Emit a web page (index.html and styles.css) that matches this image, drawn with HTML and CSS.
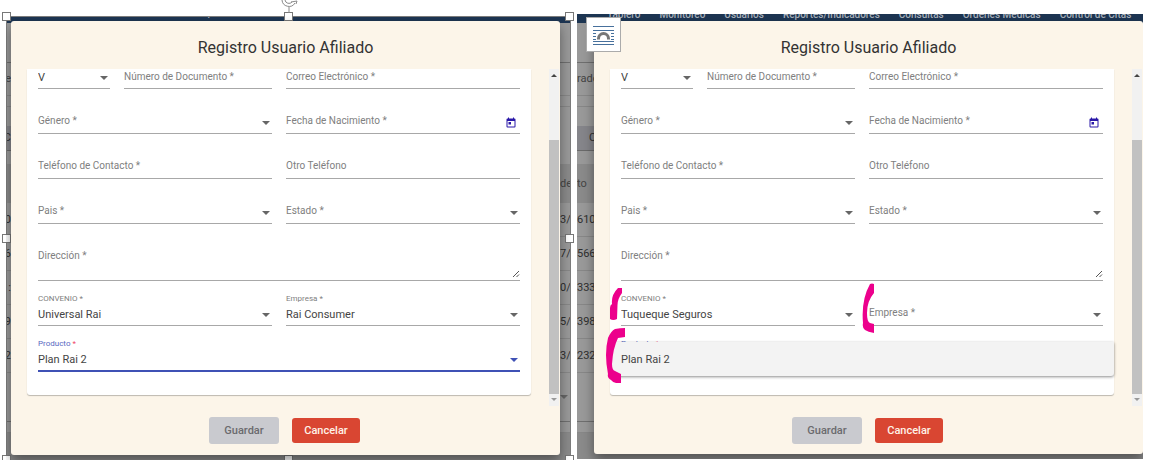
FILE: index.html
```html
<!DOCTYPE html>
<html lang="es">
<head>
<meta charset="utf-8">
<title>Registro Usuario Afiliado</title>
<link rel="stylesheet" href="styles.css">
</head>
<body>
<main class="page">

  <section class="shot shot-selected">
    <div class="screen">
      <nav class="nav nav-low">
        <a href="#">Tablero</a><a href="#">Monitoreo</a><a href="#">Usuarios</a><a href="#">Reportes/Indicadores</a><a href="#">Consultas</a><a href="#">Ordenes Médicas</a><a href="#">Control de Citas</a>
      </nav>
      <div class="stage">
        <div class="strip strip-narrow strip-end">
          <div class="seg seg-bar"></div><div class="seg seg-tab">le</div><div class="seg seg-thin"></div><div class="seg seg-space"></div><div class="seg seg-button">C</div><div class="seg seg-gap"></div><div class="seg seg-head"></div><div class="seg seg-row">00</div><div class="seg seg-row">6</div><div class="seg seg-row">:</div><div class="seg seg-row">9</div><div class="seg seg-row">2</div><div class="seg seg-foot"></div><div class="seg seg-thin"></div>
        </div>
        <div class="dialog">
          <h1 class="title">Registro Usuario Afiliado</h1>
          <form class="scroller" id="form-a">
            <div class="card">
              <div class="row row-first">
                <div class="field field-short"><select class="control" id="a-tipo" aria-label="Tipo"><option>V</option></select><i class="caret"></i></div>
                <div class="field"><label for="a-num">Número de Documento *</label><input class="control" id="a-num"></div>
                <div class="field field-half"><label for="a-mail">Correo Electrónico *</label><input class="control" id="a-mail"></div>
              </div>
              <div class="row">
                <div class="field"><label for="a-gen">Género *</label><select class="control" id="a-gen"><option></option></select><i class="caret"></i></div>
                <div class="field"><label for="a-nac">Fecha de Nacimiento *</label><input class="control" id="a-nac"><button type="button" class="calendar" aria-label="Calendario"><svg viewBox="0 0 24 24"><path d="M19 3h-1V1h-2v2H8V1H6v2H5a2 2 0 0 0-2 2v14a2 2 0 0 0 2 2h14a2 2 0 0 0 2-2V5a2 2 0 0 0-2-2zm0 16H5V8h14v11zM7 10h5v5H7z"/></svg></button></div>
              </div>
              <div class="row">
                <div class="field"><label for="a-tel">Teléfono de Contacto *</label><input class="control" id="a-tel"></div>
                <div class="field"><label for="a-otro">Otro Teléfono</label><input class="control" id="a-otro"></div>
              </div>
              <div class="row">
                <div class="field"><label for="a-pais">Pais *</label><select class="control" id="a-pais"><option></option></select><i class="caret"></i></div>
                <div class="field"><label for="a-est">Estado *</label><select class="control" id="a-est"><option></option></select><i class="caret"></i></div>
              </div>
              <div class="row">
                <div class="field field-area"><label for="a-dir">Dirección *</label><textarea class="control" id="a-dir"></textarea><svg class="grip" viewBox="0 0 8 8"><path d="M1 7 7 1M4.500 7 7 4.500"/></svg></div>
              </div>
              <div class="row">
                <div class="field"><label class="float" for="a-conv">CONVENIO *</label><select class="control" id="a-conv"><option>Universal Rai</option></select><i class="caret"></i></div>
                <div class="field"><label class="float" for="a-emp">Empresa *</label><select class="control" id="a-emp"><option>Rai Consumer</option></select><i class="caret"></i></div>
              </div>
              <div class="row">
                <div class="field field-active"><label class="float" for="a-prod">Producto <span class="required">*</span></label><select class="control" id="a-prod"><option>Plan Rai 2</option></select><i class="caret"></i></div>
              </div>
            </div>
            <div class="scrollbar"><i class="arrow arrow-up"></i><div class="track"></div><div class="thumb"></div><i class="arrow arrow-down"></i></div>
          </form>
          <div class="actions"><button class="save" form="form-a" disabled>Guardar</button><button class="cancel" type="button">Cancelar</button></div>
        </div>
        <div class="strip strip-medium">
          <div class="seg seg-bar"></div><div class="seg seg-tab"></div><div class="seg seg-thin"></div><div class="seg seg-space"></div><div class="seg seg-space"></div><div class="seg seg-space"></div><div class="seg seg-head">de</div><div class="seg seg-row">3/0</div><div class="seg seg-row">7/0</div><div class="seg seg-row">0/0</div><div class="seg seg-row">5/0</div><div class="seg seg-row">3/0</div><div class="seg seg-foot"><i class="caret"></i></div><div class="seg seg-thin"></div>
        </div>
      </div>
    </div>
    <div class="selection">
      <i class="handle h-nw"></i><i class="handle h-n"></i><i class="handle h-ne"></i><i class="handle h-w"></i><i class="handle h-e"></i><i class="handle h-sw"></i><i class="handle h-s"></i><i class="handle h-se"></i>
      <svg class="rotate" viewBox="0 0 18 20"><path d="M9 7v6" /><path d="M2 0a7 7 0 0 0 13 3M5 0a4 4 0 0 0 7 2M11 2l6-1-1 3"/></svg>
    </div>
  </section>

  <section class="shot">
    <div class="screen">
      <nav class="nav nav-high">
        <a href="#">Tablero</a><a href="#">Monitoreo</a><a href="#">Usuarios</a><a href="#">Reportes/Indicadores</a><a href="#">Consultas</a><a href="#">Ordenes Médicas</a><a href="#">Control de Citas</a>
      </nav>
      <div class="stage">
        <div class="strip strip-wide">
          <div class="seg seg-bar"></div><div class="seg seg-tab">rado</div><div class="seg seg-thin"></div><div class="seg seg-space"></div><div class="seg seg-button seg-indent">C</div><div class="seg seg-gap"></div><div class="seg seg-head">to</div><div class="seg seg-row">6100</div><div class="seg seg-row">566</div><div class="seg seg-row">333</div><div class="seg seg-row">3989</div><div class="seg seg-row">232</div><div class="seg seg-foot"></div><div class="seg seg-thin"></div>
        </div>
        <div class="dialog">
          <h1 class="title">Registro Usuario Afiliado</h1>
          <form class="scroller" id="form-b">
            <div class="card">
              <div class="row row-first">
                <div class="field field-short"><select class="control" id="b-tipo" aria-label="Tipo"><option>V</option></select><i class="caret"></i></div>
                <div class="field"><label for="b-num">Número de Documento *</label><input class="control" id="b-num"></div>
                <div class="field field-half"><label for="b-mail">Correo Electrónico *</label><input class="control" id="b-mail"></div>
              </div>
              <div class="row">
                <div class="field"><label for="b-gen">Género *</label><select class="control" id="b-gen"><option></option></select><i class="caret"></i></div>
                <div class="field"><label for="b-nac">Fecha de Nacimiento *</label><input class="control" id="b-nac"><button type="button" class="calendar" aria-label="Calendario"><svg viewBox="0 0 24 24"><path d="M19 3h-1V1h-2v2H8V1H6v2H5a2 2 0 0 0-2 2v14a2 2 0 0 0 2 2h14a2 2 0 0 0 2-2V5a2 2 0 0 0-2-2zm0 16H5V8h14v11zM7 10h5v5H7z"/></svg></button></div>
              </div>
              <div class="row">
                <div class="field"><label for="b-tel">Teléfono de Contacto *</label><input class="control" id="b-tel"></div>
                <div class="field"><label for="b-otro">Otro Teléfono</label><input class="control" id="b-otro"></div>
              </div>
              <div class="row">
                <div class="field"><label for="b-pais">Pais *</label><select class="control" id="b-pais"><option></option></select><i class="caret"></i></div>
                <div class="field"><label for="b-est">Estado *</label><select class="control" id="b-est"><option></option></select><i class="caret"></i></div>
              </div>
              <div class="row">
                <div class="field field-area"><label for="b-dir">Dirección *</label><textarea class="control" id="b-dir"></textarea><svg class="grip" viewBox="0 0 8 8"><path d="M1 7 7 1M4.500 7 7 4.500"/></svg></div>
              </div>
              <div class="row">
                <div class="field"><label class="float" for="b-conv">CONVENIO *</label><select class="control" id="b-conv"><option>Tuqueque Seguros</option></select><i class="caret"></i>
                  <svg class="mark mark-convenio" viewBox="0 0 12 32"><path d="M8 0H12V5Q7.500 11 7.500 17L7 31Q3 33 0 31V20Q0 17 2 16Q1 7 8 0Z"/></svg></div>
                <div class="field"><label for="b-emp">Empresa *</label><select class="control" id="b-emp"><option></option></select><i class="caret"></i>
                  <svg class="mark mark-empresa" viewBox="0 0 12 50"><path d="M8 1Q10 0 12 1V10Q5 18 5 30Q5 39 8 40L12 41V50Q6 49 3 47Q0 45 1 40Q-1 17 8 1Z"/></svg></div>
              </div>
              <div class="row">
                <div class="field field-active"><label class="float" for="b-prod">Producto <span class="required">*</span></label><select class="control" id="b-prod"><option>Plan Rai 2</option></select><i class="caret"></i>
                  <div class="panel" role="listbox" aria-label="Producto"><div role="option" aria-selected="true">Plan Rai 2</div></div>
                  <svg class="mark mark-producto" viewBox="0 0 19 55"><path d="M9 1Q14 0 19 0V9L12 10Q7 20 6 36Q6 42 9 43L15 46V55Q8 56 5 52Q1 50 2 46Q-2 26 2 10Q5 3 9 1Z"/></svg></div>
              </div>
            </div>
            <div class="scrollbar"><i class="arrow arrow-up"></i><div class="track"></div><div class="thumb"></div><i class="arrow arrow-down"></i></div>
          </form>
          <div class="actions actions-tight"><button class="save" form="form-b" disabled>Guardar</button><button class="cancel" type="button">Cancelar</button></div>
        </div>
      </div>
    </div>
    <button class="layout-options" aria-label="Opciones de diseño">
      <svg viewBox="0 0 21 20"><path class="lines" d="M0 1.500h21M0 5.500h21M0 8.500h3M18 8.500h3M0 11.500h3M18 11.500h3M0 14.500h3M18 14.500h3M0 16.500h21M0 19.500h21"/><path class="arch" d="M5.500 14.500v-1a5 5 0 0 1 10 0v1"/></svg>
    </button>
  </section>

</main>
</body>
</html>
```

FILE: styles.css
```css
* { box-sizing: border-box; }

body {
  margin: 0;
  background: #fff;
  color: #444;
  font: 11px/16px Roboto, "Liberation Sans", sans-serif;
  overflow: hidden;
}

.page {
  display: grid;
  grid-template-columns: 565fr 566fr;
  align-items: start;
  gap: 6px;
  padding: 14px 10px 0 6px;
}

.shot { position: relative; min-width: 0; }
.shot-selected { margin-top: 2px; }
.screen { overflow: hidden; background: #8a8a8a; }

/* Navigation bar behind the dialog */
.nav {
  display: flex;
  align-items: flex-end;
  gap: 19px;
  background: #1d3552;
  overflow: hidden;
  white-space: nowrap;
}
.nav-low { height: 7px; padding: 0 0 4px 14px; }
.nav-high { height: 9px; padding: 0 0 2px 30px; }
.nav a {
  color: #a9b1bb;
  font-size: 10px;
  font-weight: 500;
  line-height: 12px;
  text-decoration: none;
}

.stage { display: flex; margin-top: -2px; }

/* Dimmed table seen on both sides of the dialog */
.strip {
  display: flex;
  flex-direction: column;
  flex: none;
  padding-top: 2px;
  overflow: hidden;
  color: #2f2f2f;
  font-size: 11px;
}
.strip-narrow { width: 5px; }
.strip-medium { width: 11px; }
.strip-wide { width: 17px; }
.seg {
  display: flex;
  align-items: center;
  flex: none;
  background: #999;
  border-bottom: 1px solid #878787;
  white-space: nowrap;
}
.strip-end .seg { justify-content: flex-end; }
.seg-bar { height: 40px; border-color: #6f6f6f; }
.seg-tab { height: 33px; color: #444; }
.seg-thin { height: 11px; }
.seg-space { height: 19px; border: 0; }
.seg-button { height: 25px; background: #85858a; border-color: #6a6a6a; }
.seg-indent { padding-left: 12px; }
.seg-gap { height: 13px; border: 0; }
.seg-head { height: 39px; background: #8a8a8a; border: 0; color: #444; }
.seg-row { height: 34px; }
.seg-foot { height: 49px; border-color: #6f6f6f; }

/* Dialog */
.dialog {
  position: relative;
  z-index: 1;
  flex: 1;
  min-width: 0;
  margin-bottom: 5px;
  background: #fcf5e9;
  border-radius: 3px;
  box-shadow: 0 6px 12px rgba(0, 0, 0, .4);
}
.title {
  margin: 0;
  padding: 17px 0 11px;
  color: #333;
  font-size: 16px;
  font-weight: 400;
  line-height: 20px;
  text-align: center;
}
.scroller { display: flex; padding: 0 1px 0 16px; }
.card {
  flex: 1;
  min-width: 0;
  margin: 0 18px 11px 0;
  padding: 0 11px 23px;
  background: #fff;
  border-radius: 0 0 3px 3px;
  box-shadow: 0 1px 1px rgba(0, 0, 0, .25);
}

.row { display: flex; gap: 14px; }
.field {
  position: relative;
  display: grid;
  grid-template-columns: 1fr auto;
  align-items: end;
  flex: 1 1 0;
  min-width: 0;
  height: 45px;
  border-bottom: 1px solid #a8a8a8;
}
.row-first .field { height: 20px; }
.field-short { flex: 0 0 72px; }
.row-first .field-half { flex: 0 0 calc(50% - 7px); }
.field-area { height: 57px; }
.field-active { height: 46px; border-bottom: 2px solid #3f51b5; }

.field label {
  grid-area: 1 / 1;
  padding-bottom: 4px;
  color: #808080;
  font-size: 10px;
  pointer-events: none;
  z-index: 1;
}
.field .float {
  align-self: start;
  padding: 12px 0 0;
  font-size: 8px;
  line-height: 12px;
}
.field-active .float { color: #5a69bf; }
.field .required { color: #f0426b; }
.field-area label { align-self: start; padding: 24px 0 0; }

.control {
  grid-area: 1 / 1 / 2 / 3;
  appearance: none;
  width: 100%;
  height: 18px;
  margin: 0;
  padding: 0 0 2px;
  border: 0;
  outline: 0;
  background: transparent;
  color: #444;
  font: 11px/16px Roboto, "Liberation Sans", sans-serif;
  resize: none;
}
.field-area .control { height: 40px; }

.caret {
  border: 4px solid transparent;
  border-top-color: #666;
  border-bottom: 0;
  pointer-events: none;
}
.field .caret { grid-area: 1 / 2; margin: 0 2px 8px 0; }
.field-active .caret { border-top-color: #3f51b5; }

.calendar {
  grid-area: 1 / 2;
  display: flex;
  margin: 0 3px 4px 0;
  padding: 0;
  border: 0;
  background: none;
}
.calendar svg { width: 12px; height: 12px; fill: #2a18a8; }
.grip { grid-area: 1 / 2; width: 8px; height: 8px; margin-bottom: 2px; fill: none; stroke: #555; pointer-events: none; }

/* Open list of the product field */
.panel {
  position: absolute;
  top: 16px;
  left: -11px;
  right: -11px;
  padding: 10px 11px 8px;
  background: #f3f3f3;
  border-radius: 0 0 3px 3px;
  box-shadow: 0 1px 3px rgba(0, 0, 0, .45);
  z-index: 2;
}

/* Pen marks */
.mark { position: absolute; z-index: 3; fill: #ec008c; pointer-events: none; }
.mark-convenio { left: -11px; top: 7px; width: 12px; height: 32px; }
.mark-empresa { left: -7px; top: 2px; width: 12px; height: 50px; }
.mark-producto { left: -15px; top: 2px; width: 19px; height: 55px; }

.scrollbar { display: flex; flex-direction: column; align-items: center; width: 10px; background: #f1f1f1; }
.arrow { border: 3px solid transparent; }
.arrow-up { margin-top: 5px; border-top: 0; border-bottom-color: #444; }
.arrow-down { margin: 4px 0 5px; border-bottom: 0; border-top-color: #999; }
.track { height: 63px; }
.thumb { flex: 1; width: 100%; background: #c1c1c1; }

.actions {
  display: flex;
  align-items: center;
  justify-content: center;
  gap: 13px;
  padding: 11px 2px 11px 0;
}
.actions-tight { padding-bottom: 10px; }
.actions button {
  padding: 0;
  border: 0;
  border-radius: 3px;
  font: 500 11px/16px Roboto, "Liberation Sans", sans-serif;
}
.actions .save { width: 70px; height: 27px; background: #c9cacf; color: #6b6b6e; }
.actions .cancel { width: 68px; height: 25px; background: #d94632; color: #fff3e8; }

/* Selection frame */
.selection { position: absolute; inset: 0 0 -1px; border: 1px solid #7d7d7d; pointer-events: none; }
.handle { position: absolute; width: 9px; height: 9px; margin: -5px; background: #fff; border: 1px solid #777; }
.h-nw, .h-n, .h-ne { top: 0; }
.h-w, .h-e { top: 50%; }
.h-sw, .h-s, .h-se { top: 100%; }
.h-nw, .h-w, .h-sw { left: 0; }
.h-n, .h-s { left: 50%; }
.h-ne, .h-e, .h-se { left: 100%; }
.rotate { position: absolute; left: 50%; top: -17px; width: 18px; height: 20px; margin-left: -9px; fill: none; stroke: #8a8a8a; }

.layout-options {
  position: absolute;
  left: 9px;
  top: 3px;
  z-index: 2;
  display: grid;
  place-items: center;
  width: 35px;
  height: 35px;
  padding: 0;
  background: #fff;
  border: 1px solid #ababab;
}
.layout-options svg { width: 21px; height: 20px; fill: none; }
.lines { stroke: #47709c; }
.arch { stroke: #777; stroke-width: 3; }
```
